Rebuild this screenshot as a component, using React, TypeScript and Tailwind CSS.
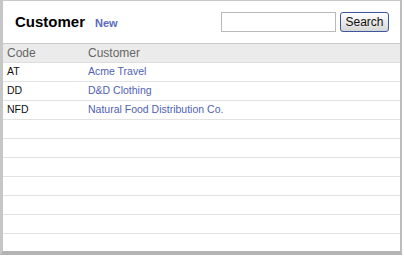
const rows = [
  { code: 'AT', name: 'Acme Travel' },
  { code: 'DD', name: 'D&D Clothing' },
  { code: 'NFD', name: 'Natural Food Distribution Co.' },
  { code: '', name: '' },
  { code: '', name: '' },
  { code: '', name: '' },
  { code: '', name: '' },
  { code: '', name: '' },
  { code: '', name: '' },
]

export default function App() {
  return (
    <div className="w-[404px] h-[256px] bg-white font-['Liberation_Sans',Arial,sans-serif]">
      <div className="w-[402px] h-[255px] flex flex-col bg-white border-t border-t-[#c8c8c8] border-l-[3px] border-l-[#c6c6c6] border-r-[2px] border-r-[#bdbdbd] border-b-[4px] border-b-[#b3b3b3]">
        {/* header */}
        <div className="h-[43px] shrink-0 flex items-center border-b border-[#c9c9c9] pl-[12px] pr-[11px]">
          <div className="flex items-baseline">
            <span className="text-[15px] font-bold text-black">Customer</span>
            <span className="ml-[10px] text-[11px] font-bold text-[#5a6abb]">New</span>
          </div>
          <div className="ml-auto flex items-center gap-[4px]">
            <input className="w-[115px] h-[20px] border border-[#b9b9b9] bg-white outline-none px-1 text-[12px]" />
            <button className="w-[49px] h-[20px] border border-[#3f559c] rounded-[3px] bg-gradient-to-b from-white to-[#d6d6d6] text-[12px] text-[#111] leading-none">
              Search
            </button>
          </div>
        </div>

        {/* column headings */}
        <div className="h-[19px] shrink-0 flex items-center bg-[#ebebeb] border-b border-[#dedede] text-[12px] text-[#666]">
          <div className="w-[85px] pl-[4px]">Code</div>
          <div>Customer</div>
        </div>

        {rows.map((r, i) => (
          <div key={i} className="h-[19px] shrink-0 flex items-center border-b border-[#e2e2e2] text-[10.5px]">
            <div className="w-[85px] pl-[4px] text-[#111]">{r.code}</div>
            <div className="text-[#4f62b3]">{r.name}</div>
          </div>
        ))}
        <div className="flex-1" />
      </div>
    </div>
  )
}
